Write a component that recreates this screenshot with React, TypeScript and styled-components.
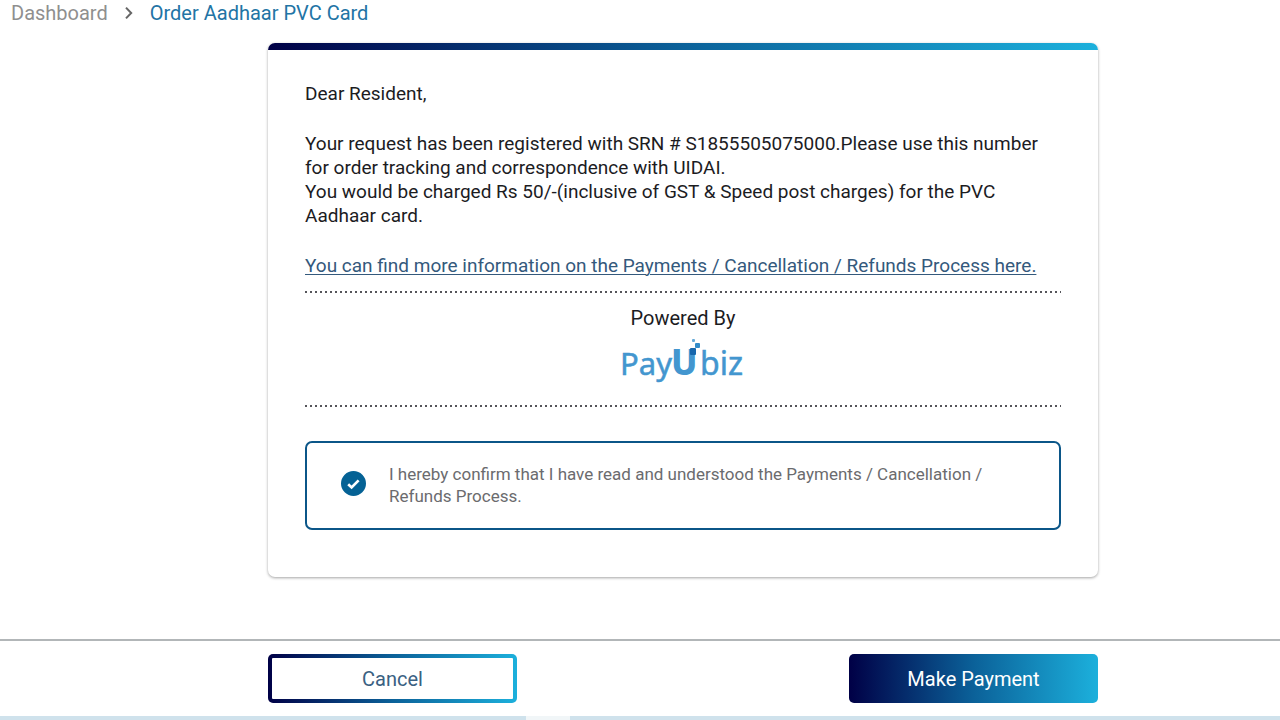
import React, { useState } from "react";
import styled, { createGlobalStyle } from "styled-components";

const brand = "linear-gradient(90deg, #000046 0%, #0b6199 50%, #1cb0dc 100%)";

const GlobalStyle = createGlobalStyle`
  *, *::before, *::after { box-sizing: border-box; }
  html, body, #root { height: 100%; }
  body {
    margin: 0;
    background: #fff;
    color: #1c1c1f;
    font: 400 20px/24px Roboto, "Liberation Sans", sans-serif;
  }
  p { margin: 0; }
`;

const Page = styled.div`
  display: flex;
  flex-direction: column;
  min-height: 100%;
`;

const Breadcrumb = styled.nav`
  display: flex;
  align-items: center;
  gap: 15px;
  padding: 1px 11px 0;
`;

const Crumb = styled.a<{ $current?: boolean }>`
  color: ${(p) => (p.$current ? "#2274a5" : "#8f8f8f")};
  text-decoration: none;
`;

const Main = styled.main`
  flex: 1;
  padding: 18px 182px 60px 268px;
`;

const Card = styled.section`
  overflow: hidden;
  border-radius: 7px;
  background: #fff;
  box-shadow: 0 1px 3px rgba(0, 0, 0, 0.36);

  &::before {
    content: "";
    display: block;
    height: 7px;
    background: ${brand};
  }
`;

const CardBody = styled.div`
  padding: 32px 37px 47px;
`;

const Message = styled.div`
  display: flex;
  flex-direction: column;
  align-items: flex-start;
  gap: 26px;
  font-size: 19px;
`;

const InfoLink = styled.a`
  color: #34597c;
  text-decoration: underline;
  text-underline-offset: 2px;
  text-decoration-thickness: 1px;
`;

const Provider = styled.div`
  display: flex;
  flex-direction: column;
  align-items: center;
  gap: 8px;
  margin: 13px 0 34px;
  padding: 15px 0 23px;
  background:
    repeating-linear-gradient(90deg, #55555a 0 2px, transparent 2px 5px) top / 100% 2px no-repeat,
    repeating-linear-gradient(90deg, #55555a 0 2px, transparent 2px 5px) bottom / 100% 2px no-repeat;
`;

const Consent = styled.label`
  display: flex;
  align-items: flex-start;
  gap: 23px;
  padding: 20px 62px 21px 34px;
  border: 2px solid #0b5688;
  border-radius: 7px;
  color: #6b6b6e;
  font-size: 17px;
  line-height: 22px;
  cursor: pointer;
`;

const Tick = styled.span`
  display: grid;
  flex: none;
  padding-top: 8px;

  & > * {
    grid-area: 1 / 1;
    place-self: center;
  }

  svg {
    pointer-events: none;
  }
`;

const TickInput = styled.input`
  appearance: none;
  width: 25px;
  height: 25px;
  margin: 0;
  border: 2px solid #056295;
  border-radius: 50%;

  &:checked {
    background: #056295;
  }
`;

const Footer = styled.footer`
  display: flex;
  justify-content: space-between;
  gap: 24px;
  padding: 13px 182px 13px 268px;
  border-top: 2px solid #b2b6b8;
`;

const ActionButton = styled.button<{ $primary?: boolean }>`
  flex: 0 1 249px;
  height: 49px;
  border: 4px solid transparent;
  border-radius: 5px;
  background: ${(p) =>
    p.$primary
      ? `${brand} border-box`
      : `linear-gradient(#fff, #fff) padding-box, ${brand} border-box`};
  color: ${(p) => (p.$primary ? "#fff" : "#3a6182")};
  font: inherit;
  cursor: pointer;
`;

const BottomStrip = styled.div`
  display: grid;
  grid-template-columns: 526fr 710fr;
  gap: 44px;
  height: 4px;
  background: #f1f6f8;
`;

const StripPart = styled.div`
  background: #cfe2ec;
`;

function PayUBizLogo() {
  return (
    <svg width="126" height="46" viewBox="0 0 126 46" role="img" aria-label="PayUbiz">
      <g fill="#4396cf" stroke="#4396cf" fontFamily="'Noto Sans', sans-serif" fontSize="31">
        <text x="0" y="37" strokeWidth="0.5">Pay</text>
        <text x="51" y="37" fontSize="35" fontWeight="800" strokeWidth="0">U</text>
        <text x="80" y="37" fontSize="32" strokeWidth="0.5">biz</text>
      </g>
      <rect x="70" y="10" width="6" height="7" rx="1" fill="#1767ad" />
      <rect x="75" y="5" width="5" height="5" rx="1" fill="#338cc9" />
      <rect x="72" y="1" width="3" height="3" rx="1" fill="#67aad7" />
    </svg>
  );
}

export default function App() {
  const [agreed, setAgreed] = useState(true);

  return (
    <>
      <GlobalStyle />
      <Page>
        <Breadcrumb aria-label="Breadcrumb">
          <Crumb href="#dashboard">Dashboard</Crumb>
          <svg width="12" height="14" viewBox="0 0 12 14" aria-hidden="true">
            <path d="M3 1.6 L8.2 7 L3 12.4" fill="none" stroke="#666" strokeWidth="2" />
          </svg>
          <Crumb href="#order" $current aria-current="page">Order Aadhaar PVC Card</Crumb>
        </Breadcrumb>
        <Main>
          <Card>
            <CardBody>
              <Message>
                <p>Dear Resident,</p>
                <p>
                  Your request has been registered with SRN # S1855505075000.Please use this number
                  <br />
                  for order tracking and correspondence with UIDAI.
                  <br />
                  You would be charged Rs 50/-(inclusive of GST &amp; Speed post charges) for the PVC
                  <br />
                  Aadhaar card.
                </p>
                <InfoLink href="#refunds">
                  You can find more information on the Payments / Cancellation / Refunds Process here.
                </InfoLink>
              </Message>
              <Provider>
                <p>Powered By</p>
                <PayUBizLogo />
              </Provider>
              <Consent>
                <Tick>
                  <TickInput type="checkbox" checked={agreed} onChange={(e) => setAgreed(e.target.checked)} />
                  <svg width="15" height="12" viewBox="0 0 15 12" aria-hidden="true">
                    <path d="M2.2 6.2 L5.6 9.4 L12.6 2.4" fill="none" stroke="#fff" strokeWidth="2.7" />
                  </svg>
                </Tick>
                <span>
                  I hereby confirm that I have read and understood the Payments / Cancellation /
                  <br />
                  Refunds Process.
                </span>
              </Consent>
            </CardBody>
          </Card>
        </Main>
        <Footer>
          <ActionButton type="button">Cancel</ActionButton>
          <ActionButton type="button" $primary>Make Payment</ActionButton>
        </Footer>
        <BottomStrip>
          <StripPart />
          <StripPart />
        </BottomStrip>
      </Page>
    </>
  );
}
